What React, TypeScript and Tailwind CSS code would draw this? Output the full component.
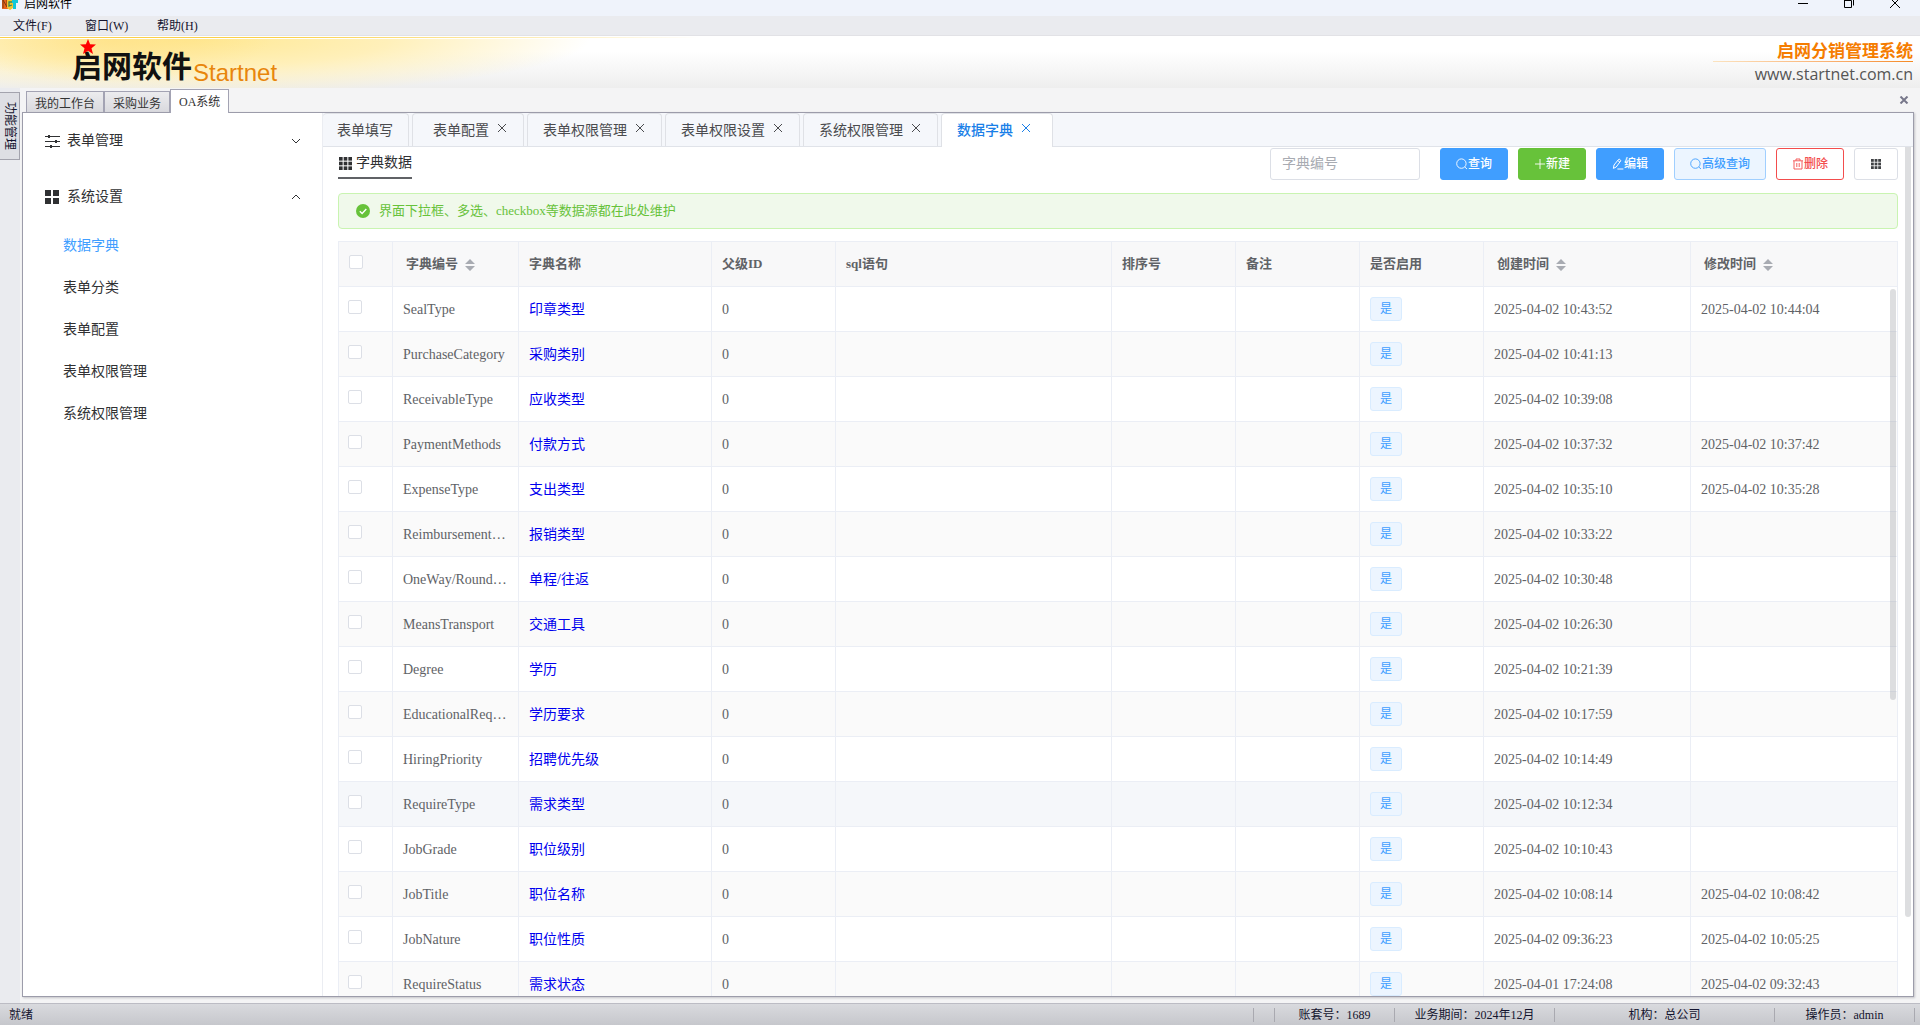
import type { ReactNode } from "react";
import clsx from "clsx";

const menus = ["文件(F)", "窗口(W)", "帮助(H)"];

const workTabs = ["我的工作台", "采购业务", "OA系统"];

const subMenus = ["数据字典", "表单分类", "表单配置", "表单权限管理", "系统权限管理"];

const pageTabs = [
  { label: "表单填写", closable: false, padding: "pr-[15px] pl-3.5" },
  { label: "表单配置", closable: true, padding: "pr-4 pl-5" },
  { label: "表单权限管理", closable: true, padding: "pr-4 pl-[15px]" },
  { label: "表单权限设置", closable: true, padding: "pr-4 pl-[15px]" },
  { label: "系统权限管理", closable: true, padding: "pr-4 pl-[15px]" },
  { label: "数据字典", closable: true, padding: "pr-[21px] pl-[15px]" },
];

const columns = [
  { label: "字典编号", width: "w-[126px]", sortable: true },
  { label: "字典名称", width: "w-[193px]" },
  { label: "父级ID", width: "w-[124px]" },
  { label: "sql语句", width: "" },
  { label: "排序号", width: "w-[124px]" },
  { label: "备注", width: "w-[124px]" },
  { label: "是否启用", width: "w-[124px]" },
  { label: "创建时间", width: "w-[207px]", sortable: true },
  { label: "修改时间", width: "w-[207px]", sortable: true },
];

type Row = { code: string; name: string; created: string; updated?: string };

const rows: Row[] = [
  { code: "SealType", name: "印章类型", created: "2025-04-02 10:43:52", updated: "2025-04-02 10:44:04" },
  { code: "PurchaseCategory", name: "采购类别", created: "2025-04-02 10:41:13" },
  { code: "ReceivableType", name: "应收类型", created: "2025-04-02 10:39:08" },
  { code: "PaymentMethods", name: "付款方式", created: "2025-04-02 10:37:32", updated: "2025-04-02 10:37:42" },
  { code: "ExpenseType", name: "支出类型", created: "2025-04-02 10:35:10", updated: "2025-04-02 10:35:28" },
  { code: "ReimbursementType", name: "报销类型", created: "2025-04-02 10:33:22" },
  { code: "OneWay/RoundTrip", name: "单程/往返", created: "2025-04-02 10:30:48" },
  { code: "MeansTransport", name: "交通工具", created: "2025-04-02 10:26:30" },
  { code: "Degree", name: "学历", created: "2025-04-02 10:21:39" },
  { code: "EducationalRequire", name: "学历要求", created: "2025-04-02 10:17:59" },
  { code: "HiringPriority", name: "招聘优先级", created: "2025-04-02 10:14:49" },
  { code: "RequireType", name: "需求类型", created: "2025-04-02 10:12:34" },
  { code: "JobGrade", name: "职位级别", created: "2025-04-02 10:10:43" },
  { code: "JobTitle", name: "职位名称", created: "2025-04-02 10:08:14", updated: "2025-04-02 10:08:42" },
  { code: "JobNature", name: "职位性质", created: "2025-04-02 09:36:23", updated: "2025-04-02 10:05:25" },
  { code: "RequireStatus", name: "需求状态", created: "2025-04-01 17:24:08", updated: "2025-04-02 09:32:43" },
];

const ACTIVE_ROW = "RequireType";

function CloseIcon({ size = 10 }: { size?: number }) {
  return (
    <svg width={size} height={size} viewBox="0 0 10 10" fill="none" stroke="currentColor">
      <path d="M1 1l8 8M9 1l-8 8" />
    </svg>
  );
}

function GridIcon({ size = 12 }: { size?: number }) {
  return (
    <svg width={size} height={size} viewBox="0 0 12.5 12.5" fill="currentColor">
      {[0, 4.5, 9].map((y) =>
        [0, 4.5, 9].map((x) => <rect key={`${x}-${y}`} x={x} y={y} width="3.5" height="3.5" />)
      )}
    </svg>
  );
}

function SearchIcon() {
  return (
    <svg width="12" height="12" viewBox="0 0 12 12" fill="none" stroke="currentColor" strokeWidth="0.9">
      <circle cx="5.4" cy="5.6" r="4.7" />
      <path d="M8.8 9l2.2 2" />
    </svg>
  );
}

function PlusIcon() {
  return (
    <svg width="12" height="12" viewBox="0 0 12 12" fill="none" stroke="currentColor" strokeWidth="0.9">
      <path d="M6 1v10M1 6h10" />
    </svg>
  );
}

function EditIcon() {
  return (
    <svg width="12" height="12" viewBox="0 0 12 12" fill="none" stroke="currentColor">
      <path d="M2 7L6.6 1.4c.6-.7 2.6.7 2 1.6L4.2 9l-2.8 1.4z M5.8 2.6l2 1.4M5.4 11h6" />
    </svg>
  );
}

function TrashIcon() {
  return (
    <svg width="12" height="12" viewBox="0 0 12 12" fill="none" stroke="currentColor" strokeWidth="0.9">
      <path d="M1 2.8h10M4 2.6V1h4v1.6M2 3v8h8V3M4.8 5v4M7.2 5v4" />
    </svg>
  );
}

function Chevron({ up }: { up?: boolean }) {
  return (
    <svg width="10" height="6" viewBox="0 0 10 6" fill="none" stroke="#303133">
      <path d={up ? "M1 5l4-4 4 4" : "M1 1l4 4 4-4"} />
    </svg>
  );
}

function SortIcon() {
  return (
    <svg width="10" height="12" viewBox="0 0 10 12" fill="#a8abb2">
      <path d="M5 0l5 5H0zM5 12L0 7h10z" />
    </svg>
  );
}

function TitleBar() {
  return (
    <header className="flex h-4 shrink-0 items-start justify-between bg-[#eff3fb] pr-5 pl-0.5">
      <div className="flex items-start gap-1.5">
        <svg width="16" height="12" viewBox="0 0 16 12">
          <path d="M0 0h6v9H0z" fill="#e8641b" />
          <path d="M1 8V0l4 7V0" fill="none" stroke="#7d3a10" />
          <path d="M5 0h6v8l-3 2-3-2z" fill="#f2c230" />
          <path d="M10 2H7v4l3-1" fill="none" stroke="#2f8a5b" strokeWidth="1.3" />
          <path d="M10 0h6v3h-2v6h-3V3h-1z" fill="#12c8d8" />
        </svg>
        <h1 className="text-xs leading-[8px] text-black">启网软件</h1>
      </div>
      <div className="flex items-start gap-9 text-black">
        <button aria-label="最小化" className="h-2.5 w-2.5">
          <svg width="10" height="10" stroke="currentColor"><path d="M0 3.5h10" /></svg>
        </button>
        <button aria-label="还原" className="h-2.5 w-2.5">
          <svg width="10" height="10" fill="none" stroke="currentColor">
            <path d="M.5 0v7.5h7V.5h-7M9.5 5.5V0" />
          </svg>
        </button>
        <button aria-label="关闭" className="h-2.5 w-2.5">
          <svg width="10" height="10" fill="none" stroke="currentColor"><path d="M0-2l10 10M10-2L0 8" /></svg>
        </button>
      </div>
    </header>
  );
}

function Banner() {
  return (
    <div className="flex h-[52px] shrink-0 items-stretch justify-between bg-linear-to-b from-white from-30% to-[#eeeeee]">
      <div className="flex w-[700px] flex-col">
        <div className="mt-px h-px bg-linear-to-r from-[#fbd04a] from-40% to-transparent" />
        <div className="h-px bg-white" />
        <div className="flex grow items-end bg-[radial-gradient(ellipse_160px_44px_at_110px_0px,#ffdf7e99_0%,transparent_100%),radial-gradient(ellipse_400px_56px_at_190px_0px,#ffe893_0%,#fff0ba_50%,transparent_100%)] pb-px pl-[72px]">
          <span className="relative text-3xl leading-10 font-bold text-[#111]">
            启网软件
            <svg className="absolute -top-2 left-2" width="16" height="15" viewBox="0 0 16 15" fill="#f00">
              <path d="M8 0l2.1 5.2 5.9.4-4.5 3.7L13 15l-5-3.2L3 15l1.5-5.7L0 5.6l5.9-.4z" />
            </svg>
          </span>
          <span className="pl-px font-['Liberation_Sans',sans-serif] text-2xl leading-7 text-[#e8860c]">Startnet</span>
        </div>
      </div>
      <div className="mr-[7px] flex w-[200px] flex-col items-end pt-[7px]">
        <span className="text-[17px] leading-[18px] font-bold text-[#f57c00]">启网分销管理系统</span>
        <div className="h-px w-full bg-linear-to-r from-[#fbe3c0] to-[#f58a1f]" />
        <a href="#" className="font-['Open_Sans',sans-serif] text-base leading-6 text-[#555]">
          www.startnet.com.cn
        </a>
      </div>
    </div>
  );
}

function WorkTabs() {
  return (
    <div className="flex h-6 items-end justify-between pr-[5px] pl-1">
      <div role="tablist" className="flex items-end">
        {workTabs.map((label) => {
          const active = label === "OA系统";
          return (
            <button
              key={label}
              role="tab"
              aria-selected={active}
              className={clsx(
                "border border-b-0 border-[#a3a3b3] text-xs text-[#333]",
                active
                  ? "relative -mb-px h-6 bg-white px-2 pt-0.5"
                  : "h-[21px] bg-linear-to-b from-[#ececee] to-[#d9d9de] px-2 pt-1"
              )}
            >
              {label}
            </button>
          );
        })}
      </div>
      <button aria-label="关闭页签" className="mb-2 text-[#77778a]">
        <svg width="10" height="8" viewBox="0 0 10 8" stroke="currentColor" strokeWidth="2">
          <path d="M1.5.5l7 7M8.5.5l-7 7" />
        </svg>
      </button>
    </div>
  );
}

function MenuGroup({ icon, label, open }: { icon: ReactNode; label: string; open?: boolean }) {
  return (
    <button aria-expanded={!!open} className="flex h-14 w-full items-center pr-[21px] pl-[22px] text-sm text-[#303133]">
      {icon}
      <span className="ml-[7px] grow text-left">{label}</span>
      <Chevron up={open} />
    </button>
  );
}

function Sidebar() {
  return (
    <nav className="w-[299px] shrink-0 bg-white">
      <MenuGroup
        label="表单管理"
        icon={
          <svg width="15" height="14" viewBox="0 0 15 14" stroke="#303133" fill="#303133">
            <path d="M0 2.5h15M0 7.5h15M0 12.5h15" />
            <path d="M3 1h2v3H3zM10 6h2v3h-2zM5 11h2v3H5z" stroke="none" />
          </svg>
        }
      />
      <MenuGroup
        open
        label="系统设置"
        icon={
          <svg width="15" height="14" viewBox="0 0 15 14" fill="#303133">
            <path d="M0 0h6v6H0zM8 0h6v6H8zM0 8h6v6H0zM8 8h6v6H8z" />
          </svg>
        }
      />
      <ul>
        {subMenus.map((label) => (
          <li key={label}>
            <a
              href="#"
              className={clsx(
                "flex h-[42px] items-center pl-10 text-sm",
                label === "数据字典" ? "text-[#409eff]" : "text-[#303133]"
              )}
            >
              {label}
            </a>
          </li>
        ))}
      </ul>
    </nav>
  );
}

function PageTabs() {
  return (
    <div role="tablist" className="flex h-[34px] shrink-0 gap-[3px] border-b border-[#e0e3e9] bg-[#f5f7fb]">
      {pageTabs.map(({ label, closable, padding }) => {
        const active = label === "数据字典";
        return (
          <div
            key={label}
            className={clsx(
              "flex items-center rounded-t-sm border border-b-0 border-[#dfe1e6] text-sm",
              padding,
              !closable && "border-l-0",
              active ? "relative -mb-px bg-white font-medium text-[#1a7fe8]" : "text-[#4a4b4e]"
            )}
          >
            <button role="tab" aria-selected={active} className="pt-0.5">
              {label}
            </button>
            {closable && (
              <button aria-label={`关闭${label}`} className="mb-1 ml-2">
                <CloseIcon />
              </button>
            )}
          </div>
        );
      })}
    </div>
  );
}

function ToolButton({ icon, label, className }: { icon: ReactNode; label?: string; className: string }) {
  return (
    <button
      aria-label={label ?? "列设置"}
      className={clsx("flex h-8 items-center rounded-[3px] border px-[15px] text-xs font-medium", className)}
    >
      {icon}
      {label}
    </button>
  );
}

function Toolbar() {
  return (
    <div className="flex items-start justify-between">
      <h2 className="flex h-[31px] items-center gap-1 border-b-2 border-[#606266] pt-0.5 pl-px text-sm text-[#303133]">
        <GridIcon size={13} />
        字典数据
      </h2>
      <div className="flex gap-2.5">
        <input
          type="text"
          aria-label="字典编号"
          placeholder="字典编号"
          className="mr-2.5 h-8 w-[150px] rounded-[3px] border border-[#dcdfe6] px-[11px] text-sm text-[#606266] placeholder:text-[#a8abb2]"
        />
        <ToolButton icon={<SearchIcon />} label="查询" className="border-[#409eff] bg-[#409eff] text-white" />
        <ToolButton icon={<PlusIcon />} label="新建" className="border-[#67c23a] bg-[#67c23a] text-white" />
        <ToolButton icon={<EditIcon />} label="编辑" className="border-[#409eff] bg-[#409eff] text-white" />
        <ToolButton icon={<SearchIcon />} label="高级查询" className="border-[#a0cfff] bg-[#ecf5ff] text-[#409eff]" />
        <ToolButton icon={<TrashIcon />} label="删除" className="border-[#f34d4d] bg-white text-[#f34d4d]" />
        <ToolButton
          icon={
            <span className="px-px">
              <GridIcon size={10} />
            </span>
          }
          className="border-[#dcdfe6] bg-white text-[#404245]"
        />
      </div>
    </div>
  );
}

function Notice() {
  return (
    <div role="status" className="flex h-9 items-center gap-[9px] rounded-sm border border-[#c9f4b1] bg-[#f0f9eb] pl-[17px] text-[13px] text-[#67c23a]">
      <svg width="14" height="14" viewBox="0 0 14 14">
        <circle cx="7" cy="7" r="7" fill="#67c23a" />
        <path d="M3.8 7.2l2.3 2.2 4.2-4.4" fill="none" stroke="#fff" strokeWidth="1.4" />
      </svg>
      界面下拉框、多选、checkbox等数据源都在此处维护
    </div>
  );
}

function Checkbox({ label }: { label: string }) {
  return (
    <input
      type="checkbox"
      aria-label={label}
      className="mb-1.5 block h-3.5 w-3.5 appearance-none rounded-xs border border-[#dcdfe6] bg-white"
    />
  );
}

function DictTable() {
  const cell = "border-r border-b border-[#ebeef5] px-2.5 pt-0.5";
  return (
    <table className="w-full table-fixed border-separate border-spacing-0 border-t border-l border-[#ebeef5] text-left text-sm text-[#606266]">
      <colgroup>
        <col className="w-[54px]" />
        {columns.map(({ label, width }) => (
          <col key={label} className={width} />
        ))}
      </colgroup>
      <thead>
        <tr className="h-[45px] bg-[#f8f8f9] text-[13px]">
          <th className={cell}>
            <Checkbox label="全选" />
          </th>
          {columns.map(({ label, sortable }) => (
            <th key={label} className={clsx(cell, "font-bold")}>
              {sortable ? (
                <button className="flex items-center gap-[7px] pl-[3px]">
                  {label}
                  <SortIcon />
                </button>
              ) : (
                label
              )}
            </th>
          ))}
        </tr>
      </thead>
      <tbody>
        {rows.map((row) => (
          <tr
            key={row.code}
            className={clsx("h-[45px]", row.code === ACTIVE_ROW ? "bg-[#f5f7fa]" : "even:bg-[#fafafa]")}
          >
            <td className="border-r border-b border-[#ebeef5] pt-0.5 pl-[9px]">
              <Checkbox label={row.name} />
            </td>
            <td className={clsx(cell, "truncate")}>{row.code}</td>
            <td className={cell}>
              <a href="#" className="text-[#0000ee]">
                {row.name}
              </a>
            </td>
            <td className={cell}>0</td>
            <td className={cell} />
            <td className={cell} />
            <td className={cell} />
            <td className="border-r border-b border-[#ebeef5] px-2.5">
              <span className="flex h-6 w-8 items-center justify-center rounded-[3px] border border-[#d9ecff] bg-[#ecf5ff] text-xs text-[#409eff]">
                是
              </span>
            </td>
            <td className={cell}>{row.created}</td>
            <td className={cell}>{row.updated}</td>
          </tr>
        ))}
      </tbody>
    </table>
  );
}

function StatusItem({ children, className }: { children?: ReactNode; className: string }) {
  return (
    <span className={clsx("flex h-3.5 items-center justify-center border-l border-[#a9a9b0]", className)}>
      {children}
    </span>
  );
}

function StatusBar() {
  return (
    <footer className="flex h-[22px] shrink-0 items-center border-t border-[#bcbcc4] bg-linear-to-b from-[#d9dade] to-[#c6c7cc] pr-[5px] pl-[9px] text-xs text-[#14142e]">
      <span className="grow">就绪</span>
      <StatusItem className="w-[21px]" />
      <StatusItem className="w-[120px]">账套号：1689</StatusItem>
      <StatusItem className="w-[160px]">业务期间：2024年12月</StatusItem>
      <StatusItem className="w-[220px]">机构：总公司</StatusItem>
      <StatusItem className="w-[140px]">操作员：admin</StatusItem>
      <StatusItem className="w-px" />
    </footer>
  );
}

export default function App() {
  return (
    <div className="flex h-screen flex-col overflow-hidden bg-[#f4f4f5] font-['Liberation_Serif','Noto_Sans_CJK_SC',serif]">
      <TitleBar />
      <div className="flex h-5 shrink-0 items-center gap-[30px] border-b border-[#e2e2e6] bg-[#eaebef] pl-[13px] text-xs text-[#14142e]">
        {menus.map((label) => (
          <button key={label} className="w-[42px] text-left whitespace-nowrap">
            {label}
          </button>
        ))}
      </div>
      <Banner />
      <div className="flex min-h-0 grow">
        <div className="w-5 shrink-0 bg-[#eaebef] pt-1">
          <button className="flex h-[68px] w-5 items-center justify-center border border-l-0 border-[#a3a3ad] bg-[#dedfe4] text-xs text-[#14142e] [writing-mode:vertical-rl] [text-orientation:sideways]">
            功能管理
          </button>
        </div>
        <div className="flex min-w-0 grow flex-col pr-1.5 pb-1.5 pl-0.5">
          <WorkTabs />
          <div className="flex min-h-0 grow border border-[#9c9caa] bg-white shadow-[1px_1px_2px_#c4c4c8]">
            <Sidebar />
            <main className="relative flex min-w-0 grow flex-col border-l border-[#ebedf2]">
              <PageTabs />
              <div className="flex min-h-0 grow flex-col overflow-hidden px-[15px] pt-px">
                <Toolbar />
                <div className="mt-[13px]">
                  <Notice />
                </div>
                <div className="relative mt-3">
                  <DictTable />
                  <div className="absolute top-12 right-0.5 h-[411px] w-1.5 rounded-full bg-[#909399]/30" />
                </div>
              </div>
              <div className="absolute top-[34px] right-0.5 h-[770px] w-1.5 rounded-b-full bg-[#909399]/30" />
            </main>
          </div>
        </div>
      </div>
      <StatusBar />
    </div>
  );
}
